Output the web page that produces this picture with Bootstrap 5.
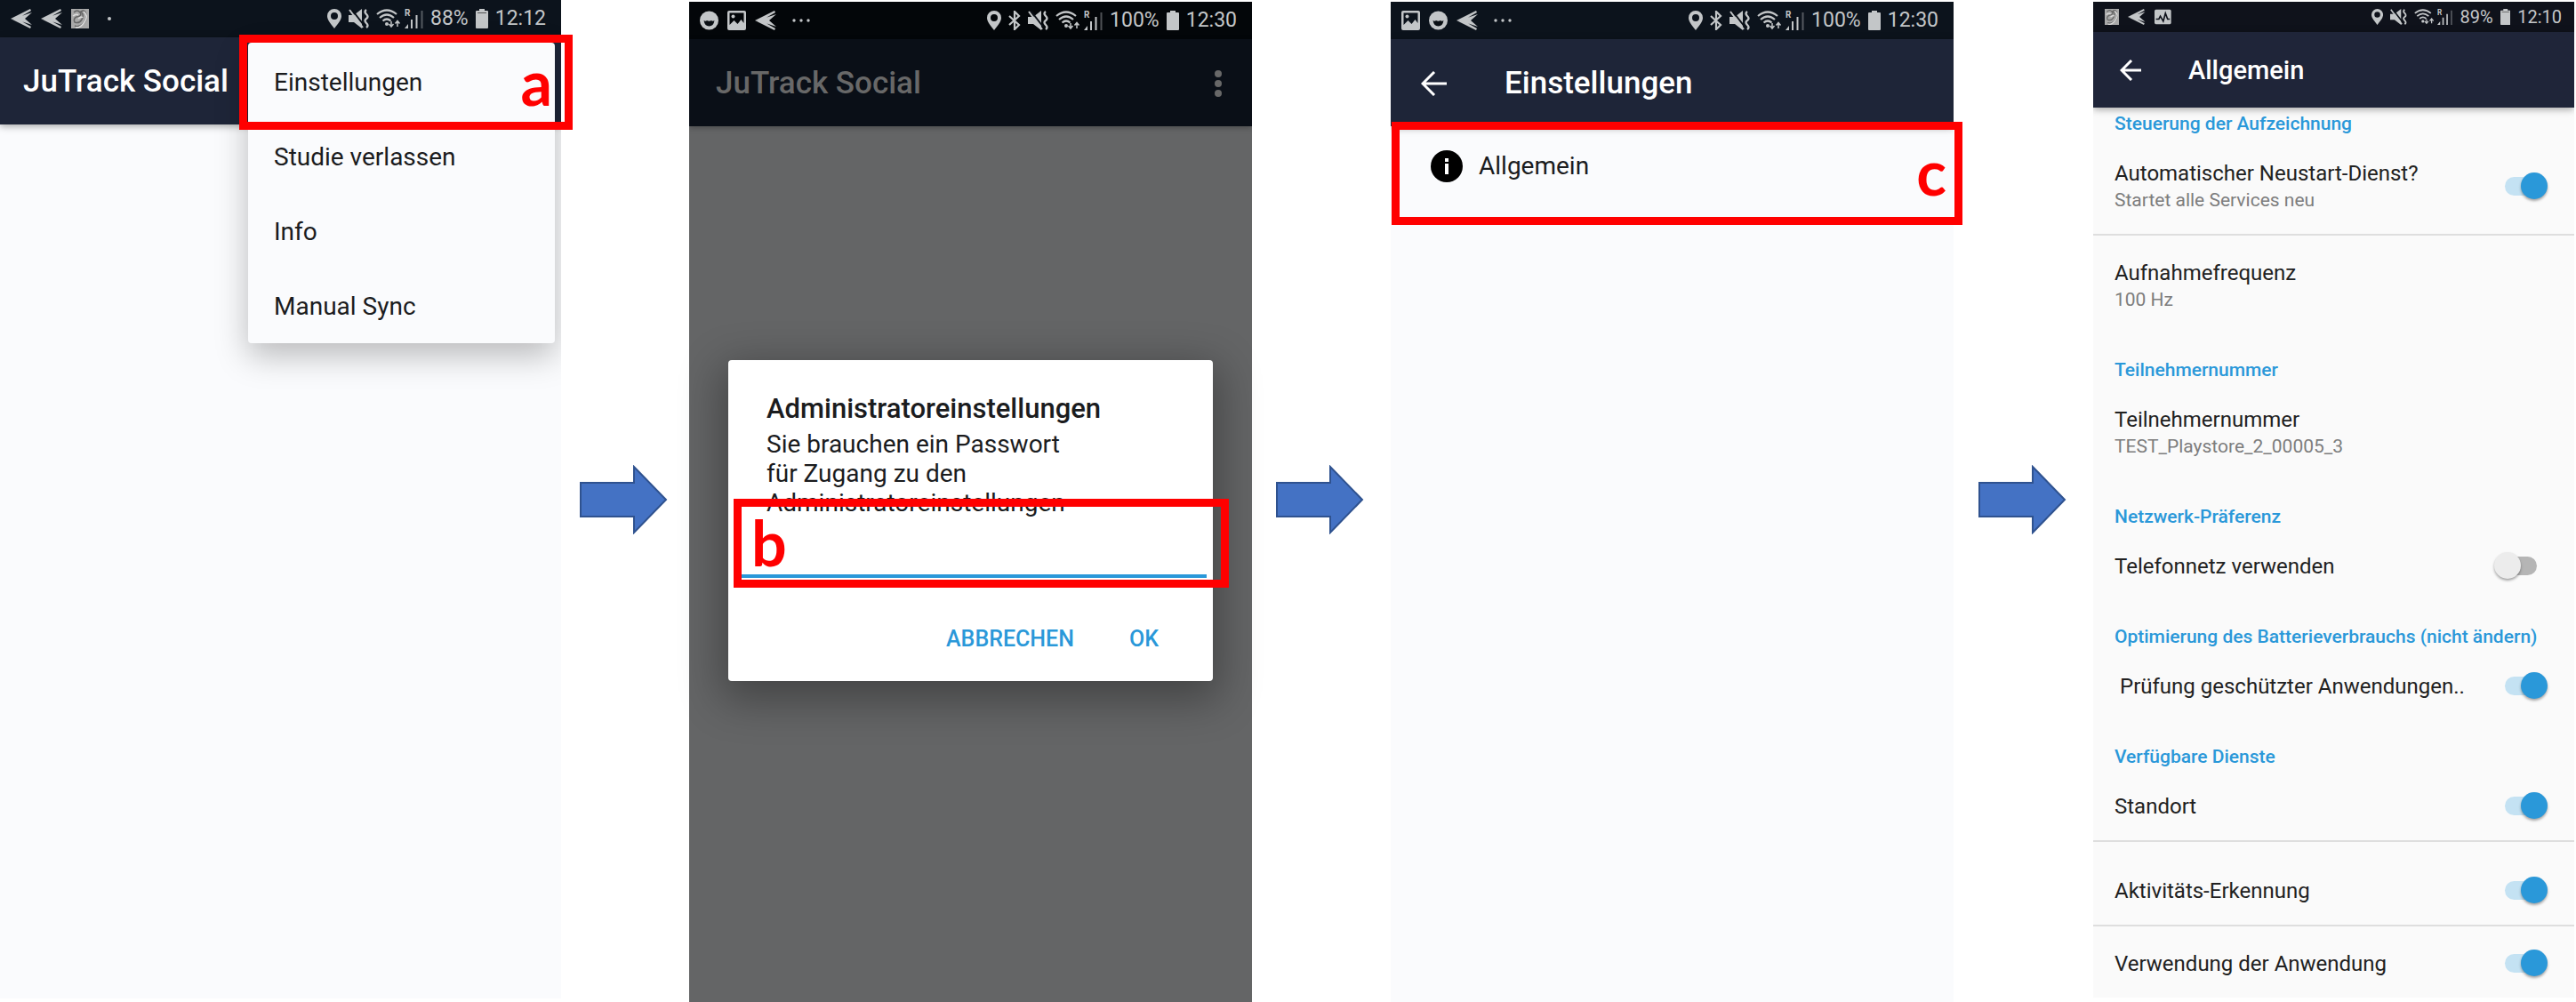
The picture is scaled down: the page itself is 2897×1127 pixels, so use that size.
<!DOCTYPE html>
<html lang="de">
<head>
<meta charset="utf-8">
<meta name="viewport" content="width=device-width, initial-scale=1">
<title>JuTrack Social – Einstellungen</title>
<link href="https://cdn.jsdelivr.net/npm/bootstrap@5.3.0/dist/css/bootstrap.min.css" rel="stylesheet">
<style>
body{font-family:Roboto,"Noto Sans",sans-serif;background:#fff;color:#1b1c1e;overflow-x:hidden}
.flow{display:grid;grid-template-columns:631fr 144fr 633fr 156fr 633fr 157fr 541fr 2fr}
.phone{position:relative;display:flex;flex-direction:column}
.phone:not(:first-child){padding-top:2px}
.screen{position:relative;overflow:hidden;background:#fafbfd}
.status{height:42px;padding:0 17px 0 12px;background:#0c131c;color:#c3c6c8;font-size:23px;line-height:24px}
.status svg{height:22px;width:auto;display:block;fill:currentColor;stroke:none}
.status .set{display:flex;align-items:center;gap:8px}
.status .set:first-child{gap:10px}
.status .net{margin-right:-4px}
.appbar{height:98px;padding:2px 30px 0 26px;background:#1e2538;color:#fff;box-shadow:0 2px 8px rgba(0,0,0,.35);position:relative}
.appbar h1{font-size:35px;line-height:40px;font-weight:500;margin:0}
.appbar button{border:0;background:none;padding:0;color:inherit;display:block}
.appbar svg,.entry svg{display:block}
.popup{position:absolute;top:48px;right:7px;width:345px;height:338px;background:#fafbfd;border-radius:4px;box-shadow:0 14px 36px rgba(0,0,0,.26);padding:0;margin:0;list-style:none}
.popup a{display:flex;align-items:center;height:84px;padding:6px 29px 0;font-size:28px;line-height:34px;color:#1b1c1e;text-decoration:none}
.frame{position:absolute;border:9px solid #f00;color:#f00;pointer-events:none;font-family:Lato,sans-serif;font-weight:700;font-size:70px;line-height:80px;display:flex}
.frame-a{top:39px;right:-13px;width:375px;height:107px;justify-content:flex-end;padding:4px 14px 0}
.frame-b{top:156px;left:6px;right:-18px;height:100px;padding:0 11px}
.frame-c{top:137px;left:1px;right:-10px;height:116px;justify-content:flex-end;padding:7px 9px 0}
.dim{background:#646566}
.dim .status{background:#030609}
.dim .appbar{background:#0a0f17;color:#686868;box-shadow:0 2px 6px rgba(0,0,0,.25)}
.overlay{position:absolute;top:44px;left:0;right:0;bottom:0;display:flex;align-items:center;padding:0 44px}
.dlg{position:relative;width:100%;height:361px;background:#fff;border-radius:4px;box-shadow:0 14px 48px 8px rgba(0,0,0,.32);padding:36px 7px 0 15px}
.dlg h2{font-size:31px;line-height:38px;font-weight:500;margin:0;padding-left:28px}
.dlg label{display:block;font-size:28px;line-height:33px;padding-left:28px;margin-top:4px}
.dlg input{display:block;width:100%;height:68px;border:0;border-bottom:4px solid #2a98d9;background:none;outline:0;padding:0 28px 0 60px;font-size:28px}
.dlg .acts{display:flex;justify-content:flex-end;gap:62px;padding:53px 54px 0 0}
.dlg .acts button{border:0;background:none;padding:0;color:#2a98d9;font-size:25px;line-height:32px;font-weight:500}
.arrow svg{width:100px;height:78px;display:block}
.entry{padding:27px 45px 24px;font-size:28px;line-height:36px;gap:18px;color:#1b1c1e}
.compact .screen{background:#fafafa}
.compact .status{height:34px;font-size:20px;padding:0 14px 0 13px;background:#0f121b}
.compact .status svg{height:18px}
.compact .appbar{height:85px;padding:0 30px;background:#1f2539}
.compact .appbar h1{font-size:29px;line-height:36px}
.sect{font-size:21px;line-height:28px;font-weight:500;color:#2a98d9;margin:0;padding:27px 24px 0}
.sect.top{padding-top:4px}
.pref{display:flex;align-items:center;justify-content:space-between;padding:27px 30px 23px 24px}
.pref.ruled{border-bottom:2px solid #dedede}
.pref.roomy{padding-top:40px}
.pref label,.pref .name{display:block;font-size:24px;line-height:30px;color:#212121}
.pref .note{font-size:21px;line-height:30px;color:#7d7d7d}
.pref.inset label{padding-left:6px}
.toggle{appearance:none;position:relative;width:60px;height:30px;margin:0;flex:none}
.toggle::before{content:"";position:absolute;left:12px;right:12px;top:4px;height:21px;border-radius:11px;background:#b5b5b5}
.toggle::after{content:"";position:absolute;left:0;top:-1px;width:30px;height:30px;border-radius:50%;background:#ececec;box-shadow:0 2px 3px rgba(0,0,0,.35)}
.toggle:checked::before{background:#c4e2f3}
.toggle:checked::after{left:30px;background:#2a98d9}
</style>
<script src="https://cdn.jsdelivr.net/npm/bootstrap@5.3.0/dist/js/bootstrap.bundle.min.js"></script>
</head>
<body>
<svg class="d-none" aria-hidden="true">
  <symbol id="plane" viewBox="0 0 24 22"><path d="M0 11 22 0 23 2 8 10.500zM3 11 24 4 16 11 24 18zM0 11 8 11.500 23 20 22 22z"/></symbol>
  <symbol id="thumb" viewBox="0 0 20 22"><rect width="20" height="22" fill="#a9a9a9"/><path d="M3 4Q7 0 10 4T6 9Q2 11 4 15Q9 17 12 12T11 3Q16 0 17 7T13 17Q8 21 4 19" fill="none" stroke="#666" stroke-width="1.500"/><path d="M2 8Q6 5 8 7M14 3Q20 8 15 15T5 21M8 11Q12 8 13 10" fill="none" stroke="#ddd" stroke-width="1.500"/></symbol>
  <symbol id="dot" viewBox="0 0 22 22"><circle cx="13" cy="11" r="2"/></symbol>
  <symbol id="dots" viewBox="0 0 30 22"><circle cx="10" cy="11" r="1.700"/><circle cx="18" cy="11" r="1.700"/><circle cx="26" cy="11" r="1.700"/></symbol>
  <symbol id="pin" viewBox="0 0 16 22"><path fill-rule="evenodd" d="M8 0a8 8 0 0 1 8 8c0 5-4.500 9-8 14C4.500 17 0 13 0 8a8 8 0 0 1 8-8zm0 4a4 4 0 1 0 0 8 4 4 0 0 0 0-8z"/></symbol>
  <symbol id="bt" viewBox="0 0 14 22"><path d="M1 6 12 16 7 21V1l5 5L1 16" fill="none" stroke="currentColor" stroke-width="2.200"/></symbol>
  <symbol id="mute" viewBox="0 0 23 22"><path d="M0 7h6l9-7v22l-9-7H0z"/><path d="M3 0 17 18" fill="none" stroke="#0a0f16" stroke-width="2"/><path d="M1 1 16 21" fill="none" stroke="currentColor" stroke-width="2"/><path d="M20 1q-3 2 0 5t0 5 0 5 0 5" fill="none" stroke="currentColor" stroke-width="2.400"/></symbol>
  <symbol id="wifi" viewBox="0 0 28 22"><g fill="none" stroke="currentColor" stroke-width="2.200"><path d="M1 6q11-9 22 0M4 10q8-7 16 0M7.500 13.500q4.500-4 9 0"/></g><circle cx="12" cy="17" r="2"/><path d="M17 14v5m-2.500-2 2.500 3 2.500-3M24 20v-6m-2.500 2.500 2.500-3 2.500 3" fill="none" stroke="currentColor" stroke-width="1.500"/></symbol>
  <symbol id="signal" viewBox="0 0 21 22"><path d="M0 22l4-5v5zM7 12h2v10H7zM12.500 7h2v15h-2z"/><path d="M18.500 2h2v20h-2z" opacity=".4"/><text x="0" y="8" font-size="10" font-weight="700" font-family="Roboto">R</text></symbol>
  <symbol id="batt" viewBox="0 0 14 22"><path d="M4 0h6v2h3a1 1 0 0 1 1 1v18a1 1 0 0 1-1 1H1a1 1 0 0 1-1-1V3a1 1 0 0 1 1-1h3z"/></symbol>
  <symbol id="battlow" viewBox="0 0 14 22"><path d="M4 0h6v2h3a1 1 0 0 1 1 1v18a1 1 0 0 1-1 1H1a1 1 0 0 1-1-1V3a1 1 0 0 1 1-1h3z"/><path d="M2 4h10v1H2z" fill="#555"/></symbol>
  <symbol id="smile" viewBox="0 0 21 22"><circle cx="10.500" cy="11" r="10.500"/><path d="M4.500 11q2 1.500 3.500 0 2.500 1.500 5 0 1.500 1.500 3.500 0-1 6.500-6 6.500T4.500 11z" fill="#0a0f14"/></symbol>
  <symbol id="pic" viewBox="0 0 21 22"><path fill-rule="evenodd" d="M2 0h17a2 2 0 0 1 2 2v18a2 2 0 0 1-2 2H2a2 2 0 0 1-2-2V2a2 2 0 0 1 2-2zM2.500 2.500V16l5-5 4 4 4-5 3 4V2.500z"/><circle cx="6.500" cy="6.500" r="2"/></symbol>
  <symbol id="pulse" viewBox="0 0 23 22"><rect y="1" width="23" height="20" rx="2"/><path d="M2 14h4l2-4 4 7 3-11 3 8h3" fill="none" stroke="#0f121b" stroke-width="2"/></symbol>
</svg>

<main class="flow min-vh-100">
  <section class="phone pb-1">
    <div class="screen flex-grow-1">
      <div class="status d-flex justify-content-between align-items-center">
        <div class="set"><svg viewBox="0 0 24 22"><use href="#plane"/></svg><svg viewBox="0 0 24 22"><use href="#plane"/></svg><svg viewBox="0 0 20 22"><use href="#thumb"/></svg><svg viewBox="0 0 22 22"><use href="#dot"/></svg></div>
        <div class="set"><svg viewBox="0 0 16 22"><use href="#pin"/></svg><svg viewBox="0 0 23 22"><use href="#mute"/></svg><svg class="net" viewBox="0 0 28 22"><use href="#wifi"/></svg><svg viewBox="0 0 21 22"><use href="#signal"/></svg><span>88%</span><svg viewBox="0 0 14 22"><use href="#battlow"/></svg><span>12:12</span></div>
      </div>
      <header class="appbar d-flex align-items-center"><h1>JuTrack Social</h1></header>
      <ul class="popup">
        <li><a href="#">Einstellungen</a></li>
        <li><a href="#">Studie verlassen</a></li>
        <li><a href="#">Info</a></li>
        <li><a href="#">Manual Sync</a></li>
      </ul>
    </div>
    <div class="frame frame-a">a</div>
  </section>

  <div class="arrow d-flex align-items-center justify-content-center pe-1 pb-1"><svg viewBox="0 0 100 78"><path d="M2 20h60V2l36 37-36 37V58H2z" fill="#4472c4" stroke="#2f528f" stroke-width="2"/></svg></div>

  <section class="phone">
    <div class="screen dim flex-grow-1">
      <div class="status d-flex justify-content-between align-items-center">
        <div class="set"><svg viewBox="0 0 21 22"><use href="#smile"/></svg><svg viewBox="0 0 21 22"><use href="#pic"/></svg><svg viewBox="0 0 24 22"><use href="#plane"/></svg><svg viewBox="0 0 30 22"><use href="#dots"/></svg></div>
        <div class="set"><svg viewBox="0 0 16 22"><use href="#pin"/></svg><svg viewBox="0 0 14 22"><use href="#bt"/></svg><svg viewBox="0 0 23 22"><use href="#mute"/></svg><svg class="net" viewBox="0 0 28 22"><use href="#wifi"/></svg><svg viewBox="0 0 21 22"><use href="#signal"/></svg><span>100%</span><svg viewBox="0 0 14 22"><use href="#batt"/></svg><span>12:30</span></div>
      </div>
      <header class="appbar d-flex align-items-center justify-content-between"><h1 class="ps-1">JuTrack Social</h1>
        <button type="button" aria-label="Mehr"><svg width="16" height="30" fill="currentColor"><circle cx="8" cy="4" r="4"/><circle cx="8" cy="15" r="4"/><circle cx="8" cy="26" r="4"/></svg></button></header>
    </div>
    <div class="overlay">
      <form class="dlg">
        <h2>Administratoreinstellungen</h2>
        <label for="pw">Sie brauchen ein Passwort<br>für Zugang zu den<br>Administratoreinstellungen</label>
        <input id="pw" type="password">
        <div class="acts"><button type="button">ABBRECHEN</button><button type="button">OK</button></div>
        <div class="frame frame-b">b</div>
      </form>
    </div>
  </section>

  <div class="arrow d-flex align-items-center justify-content-center pe-1 pb-1"><svg viewBox="0 0 100 78"><path d="M2 20h60V2l36 37-36 37V58H2z" fill="#4472c4" stroke="#2f528f" stroke-width="2"/></svg></div>

  <section class="phone">
    <div class="screen flex-grow-1">
      <div class="status d-flex justify-content-between align-items-center">
        <div class="set"><svg viewBox="0 0 21 22"><use href="#pic"/></svg><svg viewBox="0 0 21 22"><use href="#smile"/></svg><svg viewBox="0 0 24 22"><use href="#plane"/></svg><svg viewBox="0 0 30 22"><use href="#dots"/></svg></div>
        <div class="set"><svg viewBox="0 0 16 22"><use href="#pin"/></svg><svg viewBox="0 0 14 22"><use href="#bt"/></svg><svg viewBox="0 0 23 22"><use href="#mute"/></svg><svg class="net" viewBox="0 0 28 22"><use href="#wifi"/></svg><svg viewBox="0 0 21 22"><use href="#signal"/></svg><span>100%</span><svg viewBox="0 0 14 22"><use href="#batt"/></svg><span>12:30</span></div>
      </div>
      <header class="appbar d-flex align-items-center"><button type="button" class="ms-2 me-5" aria-label="Zurück"><svg width="30" height="28" fill="none" stroke="currentColor" stroke-width="3"><path d="M29 14H3M15 1 2 14l13 13"/></svg></button><h1 class="ps-3">Einstellungen</h1></header>
      <a href="#" class="entry d-flex align-items-center text-decoration-none"><svg width="36" height="36"><circle cx="18" cy="18" r="18" fill="#000"/><path d="M16 9h4v4h-4zM16 15h4v12h-4z" fill="#fff"/></svg>Allgemein</a>
    </div>
    <div class="frame frame-c">c</div>
  </section>

  <div class="arrow d-flex align-items-center justify-content-center pe-1 pb-1"><svg viewBox="0 0 100 78"><path d="M2 20h60V2l36 37-36 37V58H2z" fill="#4472c4" stroke="#2f528f" stroke-width="2"/></svg></div>

  <section class="phone compact pb-1">
    <div class="screen">
      <div class="status d-flex justify-content-between align-items-center">
        <div class="set"><svg viewBox="0 0 20 22"><use href="#thumb"/></svg><svg viewBox="0 0 24 22"><use href="#plane"/></svg><svg viewBox="0 0 23 22"><use href="#pulse"/></svg></div>
        <div class="set"><svg viewBox="0 0 16 22"><use href="#pin"/></svg><svg viewBox="0 0 23 22"><use href="#mute"/></svg><svg class="net" viewBox="0 0 28 22"><use href="#wifi"/></svg><svg viewBox="0 0 21 22"><use href="#signal"/></svg><span>89%</span><svg viewBox="0 0 14 22"><use href="#battlow"/></svg><span>12:10</span></div>
      </div>
      <header class="appbar d-flex align-items-center"><button type="button" class="me-5" aria-label="Zurück"><svg width="25" height="24" fill="none" stroke="currentColor" stroke-width="3"><path d="M24 12H3M13 1 2 12l11 11"/></svg></button><h1 class="ps-1">Allgemein</h1></header>
      <h2 class="sect top">Steuerung der Aufzeichnung</h2>
      <div class="pref ruled"><div><label for="s1">Automatischer Neustart-Dienst?</label><div class="note">Startet alle Services neu</div></div><input class="toggle" type="checkbox" role="switch" id="s1" checked></div>
      <div class="pref"><div><div class="name">Aufnahmefrequenz</div><div class="note">100 Hz</div></div></div>
      <h2 class="sect">Teilnehmernummer</h2>
      <div class="pref"><div><div class="name">Teilnehmernummer</div><div class="note">TEST_Playstore_2_00005_3</div></div></div>
      <h2 class="sect">Netzwerk-Präferenz</h2>
      <div class="pref"><label for="s2">Telefonnetz verwenden</label><input class="toggle" type="checkbox" role="switch" id="s2"></div>
      <h2 class="sect">Optimierung des Batterieverbrauchs (nicht ändern)</h2>
      <div class="pref inset"><label for="s3">Prüfung geschützter Anwendungen..</label><input class="toggle" type="checkbox" role="switch" id="s3" checked></div>
      <h2 class="sect">Verfügbare Dienste</h2>
      <div class="pref ruled"><label for="s4">Standort</label><input class="toggle" type="checkbox" role="switch" id="s4" checked></div>
      <div class="pref ruled roomy"><label for="s5">Aktivitäts-Erkennung</label><input class="toggle" type="checkbox" role="switch" id="s5" checked></div>
      <div class="pref"><label for="s6">Verwendung der Anwendung</label><input class="toggle" type="checkbox" role="switch" id="s6" checked></div>
    </div>
  </section>
</main>
</body>
</html>
